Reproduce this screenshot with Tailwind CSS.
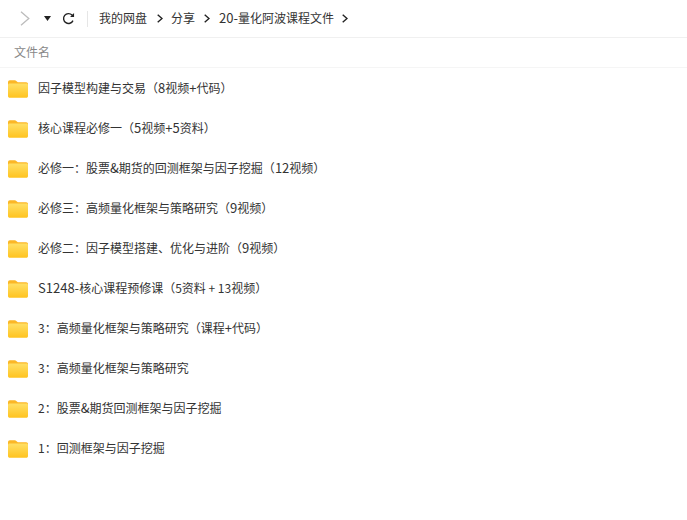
<!DOCTYPE html>
<html lang="zh">
<head>
    <meta charset="UTF-8">
    <title>20-量化阿波课程文件</title>
    <script src="https://cdn.jsdelivr.net/npm/@tailwindcss/browser@4"></script>
</head>
<body class="bg-white w-[687px] h-[520px] overflow-hidden font-['Noto_Sans_CJK_SC','Noto_Sans',sans-serif] text-[12px] text-[#333]">
    <svg width="0" height="0" class="absolute">
        <defs>
            <linearGradient id="folderFront" x1="0" y1="0" x2="0" y2="1">
                <stop offset="0" stop-color="#ffe066"/>
                <stop offset="1" stop-color="#ffc31f"/>
            </linearGradient>
            <symbol id="folder" viewBox="0 0 20 20">
                <path d="M0 3.2C0 2.100.8 1.300 1.800 1.300h5c.6 0 1.100.2 1.500.6L9.800 3.200H18.200c1 0 1.800.8 1.800 1.800V8H0Z" fill="#fbb726"/>
                <path d="M0 6C0 5.100.7 4.400 1.600 4.400H18.400c.9 0 1.600.7 1.600 1.600V17c0 1-.8 1.800-1.800 1.800H1.800c-1 0-1.800-.8-1.800-1.800Z" fill="url(#folderFront)"/>
            </symbol>
        </defs>
    </svg>

    <div class="h-[38px] flex items-center border-b border-[#f0f0f0]">
        <svg class="ml-[20px] w-[10px] h-[15px]" viewBox="0 0 10 15" fill="none" stroke="#bcbcbc" stroke-width="1.300"><path d="M1 .7l7.800 6.800L1 14.300"/></svg>
        <svg class="ml-[14px] w-[7px] h-[5px]" viewBox="0 0 7 5" fill="#222"><path d="M0 0h7L3.500 5Z"/></svg>
        <svg class="ml-[11px] w-[13px] h-[13px]" viewBox="0 0 14 14" fill="none" stroke="#222" stroke-width="1.500"><path d="M11.800 9.300A5.300 5.300 0 1 1 10.800 3.300L12.300 4.800"/><path d="M13 1v4.300H8.700" fill="#222" stroke="none"/></svg>
        <div class="ml-[12px] w-px h-[16px] bg-[#e6e6e6]"></div>
        <span class="ml-[11px] mb-[2px]">我的网盘</span>
        <svg class="ml-[10px] w-[6px] h-[9px]" viewBox="0 0 6 9" fill="none" stroke="#222" stroke-width="1.400"><path d="M.7 .7l4.300 3.800-4.300 3.800"/></svg>
        <span class="ml-[8px] mb-[2px]">分享</span>
        <svg class="ml-[9px] w-[6px] h-[9px]" viewBox="0 0 6 9" fill="none" stroke="#222" stroke-width="1.400"><path d="M.7 .7l4.300 3.800-4.300 3.800"/></svg>
        <span class="ml-[9px] mb-[2px]"><span class="text-[13px]">20-</span>量化阿波课程文件</span>
        <svg class="ml-[8px] w-[6px] h-[9px]" viewBox="0 0 6 9" fill="none" stroke="#222" stroke-width="1.400"><path d="M.7 .7l4.300 3.800-4.300 3.800"/></svg>
    </div>

    <div class="h-[30px] flex items-center pl-[14px] border-b border-[#f5f5f5] text-[#888]"><span class="mb-[2px]">文件名</span></div>

    <ul class="pt-[1px]">
        <li class="h-[40px] flex items-center pl-[8px]"><svg class="w-[20px] h-[20px] mr-[10px]"><use href="#folder"/></svg><span class="mb-[2px]">因子模型构建与交易（<span class="text-[13px]">8</span>视频<span class="text-[13px]">+</span>代码）</span></li>
        <li class="h-[40px] flex items-center pl-[8px]"><svg class="w-[20px] h-[20px] mr-[10px]"><use href="#folder"/></svg><span class="mb-[2px]">核心课程必修一（<span class="text-[13px]">5</span>视频<span class="text-[13px]">+5</span>资料）</span></li>
        <li class="h-[40px] flex items-center pl-[8px]"><svg class="w-[20px] h-[20px] mr-[10px]"><use href="#folder"/></svg><span class="mb-[2px]">必修一：股票<span class="text-[13px]">&amp;</span>期货的回测框架与因子挖掘（<span class="text-[13px]">12</span>视频）</span></li>
        <li class="h-[40px] flex items-center pl-[8px]"><svg class="w-[20px] h-[20px] mr-[10px]"><use href="#folder"/></svg><span class="mb-[2px]">必修三：高频量化框架与策略研究（<span class="text-[13px]">9</span>视频）</span></li>
        <li class="h-[40px] flex items-center pl-[8px]"><svg class="w-[20px] h-[20px] mr-[10px]"><use href="#folder"/></svg><span class="mb-[2px]">必修二：因子模型搭建、优化与进阶（<span class="text-[13px]">9</span>视频）</span></li>
        <li class="h-[40px] flex items-center pl-[8px]"><svg class="w-[20px] h-[20px] mr-[10px]"><use href="#folder"/></svg><span class="mb-[2px]"><span class="text-[13px]">S1248-</span>核心课程预修课（5资料 + 13视频）</span></li>
        <li class="h-[40px] flex items-center pl-[8px]"><svg class="w-[20px] h-[20px] mr-[10px]"><use href="#folder"/></svg><span class="mb-[2px]">3：高频量化框架与策略研究（课程<span class="text-[13px]">+</span>代码）</span></li>
        <li class="h-[40px] flex items-center pl-[8px]"><svg class="w-[20px] h-[20px] mr-[10px]"><use href="#folder"/></svg><span class="mb-[2px]">3：高频量化框架与策略研究</span></li>
        <li class="h-[40px] flex items-center pl-[8px]"><svg class="w-[20px] h-[20px] mr-[10px]"><use href="#folder"/></svg><span class="mb-[2px]">2：股票<span class="text-[13px]">&amp;</span>期货回测框架与因子挖掘</span></li>
        <li class="h-[40px] flex items-center pl-[8px]"><svg class="w-[20px] h-[20px] mr-[10px]"><use href="#folder"/></svg><span class="mb-[2px]">1：回测框架与因子挖掘</span></li>
    </ul>
</body>
</html>
